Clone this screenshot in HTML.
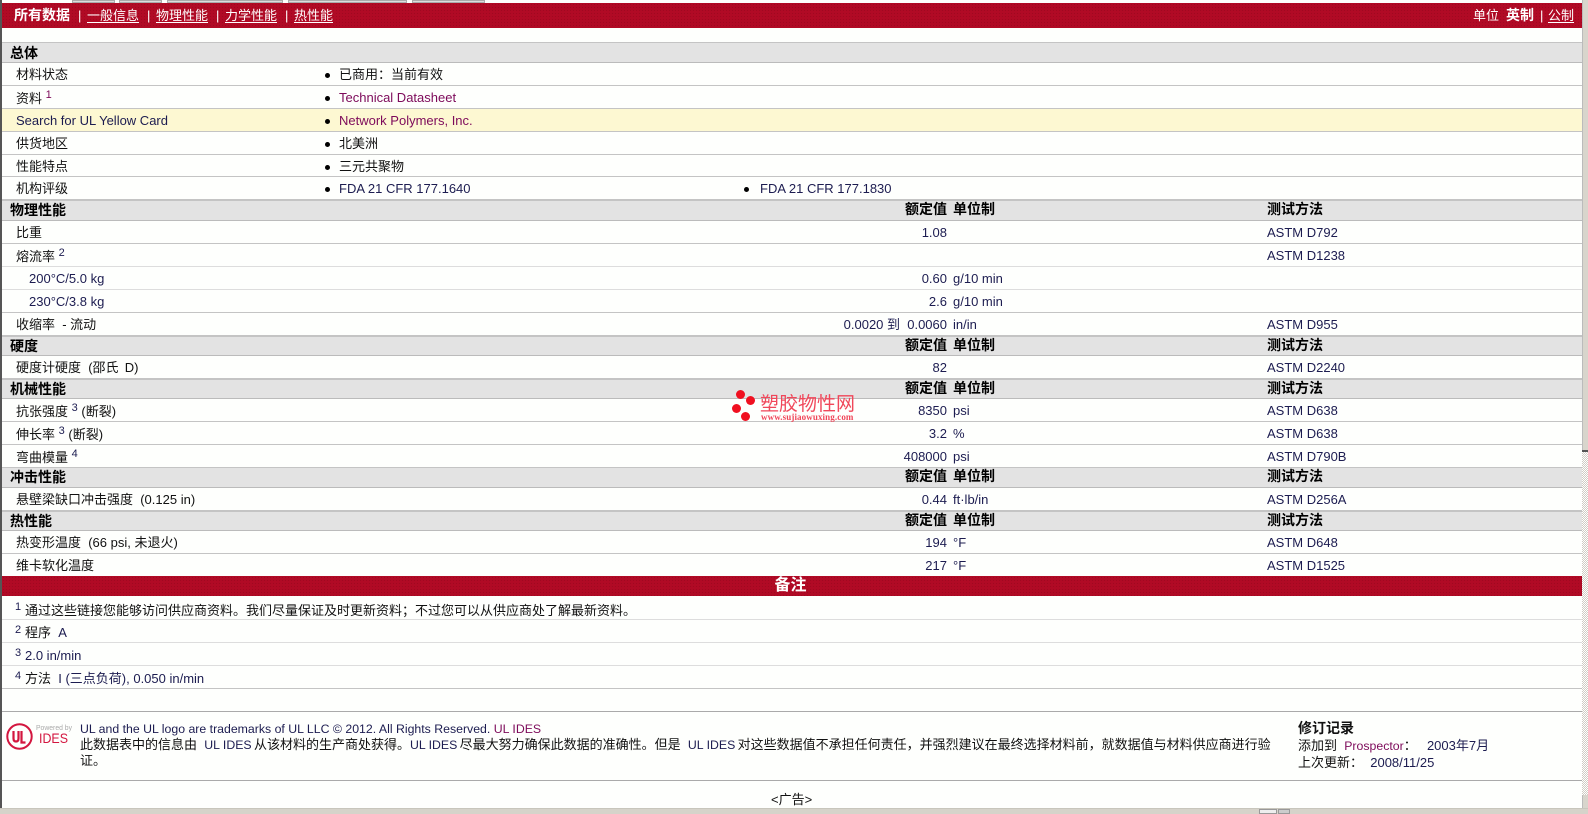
<!DOCTYPE html>
<html lang="zh"><head><meta charset="utf-8"><title>Data</title>
<style>
html,body{margin:0;padding:0;width:1588px;height:814px;overflow:hidden;background:#fefffd}
body{position:relative;font:13px/1 "Liberation Sans","WenQuanYi Zen Hei","Noto Sans CJK SC",sans-serif;color:#111}
.red{position:absolute;left:2px;width:1580px;background-color:#b10a25;background-image:radial-gradient(#a00820 .5px,transparent .8px);background-size:3px 3px;color:#fff}
.red b{font-size:14px}
.r{position:absolute;left:2px;width:1580px;border-bottom:1px solid #c4c4c4;box-sizing:border-box}
.h{background-color:#e3e3e3;border-top:1px solid #c4c4c4;border-bottom:1px solid #bbb;font-weight:bold;color:#000;font-size:14px}
.y{background:#fdf8d2}
.r span,.a{position:absolute;white-space:nowrap}
.r:not(.h)>span:not(.b){margin-top:1px}
.n{left:14px}.s{left:27px}.t{left:8px;margin-top:1px}
.b{left:323px;width:5px;height:5px;border-radius:50%;background:#000;margin-top:10px}
.b2{left:742px}
.c{left:337px}.c2{left:758px}
.l{color:#7d0a5a}
.v{right:635px}.u{left:951px}.m{left:1265px}
.d{color:#1c1c50}
sup{font-size:11px;line-height:0;vertical-align:5px;color:#1c1c50}
.f{font-size:12.3px}
.g{margin-right:-1.3px}
.nt{line-height:28px!important}
.nu{line-height:24px!important}
.r.nu>span.sp{margin-top:2px}
.red u{text-underline-offset:2px}
.dot{position:absolute;border-radius:50%;background:#f01020}
</style></head><body>
<div class="a" style="left:0;top:0;width:2px;height:808px;background:#555"></div>
<div class="a" style="left:72px;top:0;width:43px;height:3px;background:#ddd;border:1px solid #aaa;box-sizing:border-box"></div>
<div class="a" style="left:119px;top:0;width:43px;height:3px;background:#ddd;border:1px solid #aaa;box-sizing:border-box"></div>
<div class="a" style="left:167px;top:0;width:116px;height:3px;background:#ddd;border:1px solid #aaa;box-sizing:border-box"></div>
<div class="a" style="left:288px;top:0;width:119px;height:3px;background:#ddd;border:1px solid #aaa;box-sizing:border-box"></div>
<div class="a" style="left:412px;top:0;width:73px;height:3px;background:#ddd;border:1px solid #aaa;box-sizing:border-box"></div>

<div class="red" style="top:3px;height:25px;line-height:25px">
<span class="a" style="left:12px"><b>所有数据</b></span><span class="a" style="left:76px">|</span>
<span class="a" style="left:85px"><u>一般信息</u></span><span class="a" style="left:145px">|</span>
<span class="a" style="left:154px"><u>物理性能</u></span><span class="a" style="left:214px">|</span>
<span class="a" style="left:223px"><u>力学性能</u></span><span class="a" style="left:283px">|</span>
<span class="a" style="left:292px"><u>热性能</u></span>
<span class="a" style="left:1471px">单位</span><span class="a" style="left:1504px"><b>英制</b></span><span class="a" style="left:1538px">|</span><span class="a" style="left:1546px"><u>公制</u></span>
</div>

<div class="r h" style="top:42px;height:21px;line-height:19px"><span class="t">总体</span></div>
<div class="r" style="top:63px;height:23px;line-height:22px"><span class="n">材料状态</span><span class="b"></span><span class="c">已商用：当前有效</span></div>
<div class="r" style="top:86px;height:23px;line-height:24px"><span class="n">资料 <sup class="l">1</sup></span><span class="b"></span><span class="c l" style="line-height:22px">Technical Datasheet</span></div>
<div class="r y" style="top:109px;height:23px;line-height:22px"><span class="n d">Search for UL Yellow Card</span><span class="b"></span><span class="c l">Network Polymers, Inc.</span></div>
<div class="r" style="top:132px;height:23px;line-height:22px"><span class="n">供货地区</span><span class="b"></span><span class="c">北美洲</span></div>
<div class="r" style="top:155px;height:22px;line-height:22px"><span class="n">性能特点</span><span class="b"></span><span class="c">三元共聚物</span></div>
<div class="r" style="top:177px;height:23px;line-height:22px"><span class="n">机构评级</span><span class="b"></span><span class="c d">FDA 21 CFR 177.1640</span><span class="b b2"></span><span class="c2 d">FDA 21 CFR 177.1830</span></div>

<div class="r h" style="top:200px;height:21px;line-height:17px"><span class="t">物理性能</span><span class="v">额定值</span><span class="u">单位制</span><span class="m">测试方法</span></div>
<div class="r" style="top:221px;height:23px;line-height:22px"><span class="n">比重</span><span class="v d">1.08</span><span class="m d">ASTM D792</span></div>
<div class="r" style="top:244px;height:23px;line-height:24px;border-color:#ddd"><span class="n">熔流率 <sup>2</sup></span><span class="m d" style="line-height:22px">ASTM D1238</span></div>
<div class="r" style="top:267px;height:23px;line-height:22px;border-color:#ddd"><span class="s d">200°C/5.0 kg</span><span class="v d">0.60</span><span class="u d">g/10 min</span></div>
<div class="r" style="top:290px;height:23px;line-height:22px"><span class="s d">230°C/3.8 kg</span><span class="v d">2.6</span><span class="u d">g/10 min</span></div>
<div class="r" style="top:313px;height:23px;line-height:22px"><span class="n">收缩率 &nbsp;- 流动</span><span class="v d">0.0020 到&nbsp;&nbsp;0.0060</span><span class="u d">in/in</span><span class="m d">ASTM D955</span></div>

<div class="r h" style="top:336px;height:20px;line-height:16px"><span class="t">硬度</span><span class="v">额定值</span><span class="u">单位制</span><span class="m">测试方法</span></div>
<div class="r" style="top:356px;height:23px;line-height:22px"><span class="n">硬度计硬度 &nbsp;(邵氏 &thinsp;D)</span><span class="v d">82</span><span class="m d">ASTM D2240</span></div>

<div class="r h" style="top:379px;height:20px;line-height:16px"><span class="t">机械性能</span><span class="v">额定值</span><span class="u">单位制</span><span class="m">测试方法</span></div>
<div class="r" style="top:399px;height:23px;line-height:24px"><span class="n">抗张强度 <sup>3</sup> (断裂)</span><span class="v d" style="line-height:22px">8350</span><span class="u d" style="line-height:22px">psi</span><span class="m d" style="line-height:22px">ASTM D638</span></div>
<div class="r" style="top:422px;height:23px;line-height:24px"><span class="n">伸长率 <sup>3</sup> (断裂)</span><span class="v d" style="line-height:22px">3.2</span><span class="u d" style="line-height:22px">%</span><span class="m d" style="line-height:22px">ASTM D638</span></div>
<div class="r" style="top:445px;height:23px;line-height:24px"><span class="n">弯曲模量 <sup>4</sup></span><span class="v d" style="line-height:22px">408000</span><span class="u d" style="line-height:22px">psi</span><span class="m d" style="line-height:22px">ASTM D790B</span></div>

<div class="r h" style="top:467px;height:21px;line-height:17px"><span class="t">冲击性能</span><span class="v">额定值</span><span class="u">单位制</span><span class="m">测试方法</span></div>
<div class="r" style="top:488px;height:23px;line-height:22px"><span class="n">悬壁梁缺口冲击强度 &nbsp;(0.125 in)</span><span class="v d">0.44</span><span class="u d">ft·lb/in</span><span class="m d">ASTM D256A</span></div>

<div class="r h" style="top:511px;height:20px;line-height:16px"><span class="t">热性能</span><span class="v">额定值</span><span class="u">单位制</span><span class="m">测试方法</span></div>
<div class="r" style="top:531px;height:23px;line-height:22px"><span class="n">热变形温度 &nbsp;(66 psi, 未退火)</span><span class="v d">194</span><span class="u d">°F</span><span class="m d">ASTM D648</span></div>
<div class="r" style="top:554px;height:22px;line-height:22px;border:0"><span class="n">维卡软化温度</span><span class="v d">217</span><span class="u d">°F</span><span class="m d">ASTM D1525</span></div>

<div class="red" style="top:576px;height:20px;line-height:20px;text-align:center;font-size:16px;font-weight:bold;text-indent:-3px">备注</div>

<div class="r nt" style="top:596px;height:24px;border-color:#ddd"><span style="left:13px"><sup>1</sup></span><span style="left:23px">通过这些链接您能够访问供应商资料。我们尽量保证及时更新资料；不过您可以从供应商处了解最新资料。</span></div>
<div class="r nu" style="top:620px;height:23px;border-color:#ddd"><span class="sp" style="left:13px"><sup>2</sup></span><span style="left:23px">程序 &nbsp;<span class="d" style="position:static">A</span></span></div>
<div class="r nu" style="top:643px;height:23px;border-color:#ddd"><span class="sp" style="left:13px"><sup>3</sup></span><span class="d" style="left:23px">2.0 in/min</span></div>
<div class="r nu" style="top:666px;height:23px"><span class="sp" style="left:13px"><sup>4</sup></span><span style="left:23px">方法 &nbsp;<span class="d" style="position:static">I (三点负荷), 0.050 in/min</span></span></div>

<div class="r" style="top:711px;height:1px;background:#aaa;border:0"></div>

<svg class="a" style="left:6px;top:722px" width="70" height="30" viewBox="0 0 70 30">
<circle cx="13.5" cy="14.5" r="12.2" fill="none" stroke="#d3163f" stroke-width="2"/>
<path d="M7.5 9v7.5q0 3 2.5 3t2.5-3V9M15.5 9v11.5h4" fill="none" stroke="#d3163f" stroke-width="2.2"/>
<text x="30" y="8" font-family="Liberation Sans" font-size="7.5" fill="#aaa" textLength="36" lengthAdjust="spacingAndGlyphs">Powered by</text>
<text x="33" y="21" font-family="Liberation Sans" font-size="14" fill="#d3163f" textLength="29" lengthAdjust="spacingAndGlyphs">IDES</text>
</svg>

<div class="a d f" style="left:80px;top:722px;line-height:15px">UL and the UL logo are trademarks of UL LLC © 2012. All Rights Reserved. <span class="l">UL IDES</span></div>
<div class="a" style="left:80px;top:737px;width:1195px;white-space:normal;line-height:16px">此数据表中的信息由 &nbsp;<span class="d f g">UL IDES</span> 从该材料的生产商处获得。<span class="d f g">UL IDES</span> 尽最大努力确保此数据的准确性。但是 &nbsp;<span class="d f g">UL IDES</span> 对这些数据值不承担任何责任，并强烈建议在最终选择材料前，就数据值与材料供应商进行验证。</div>
<div class="a" style="left:1298px;top:721px;line-height:15px;font-size:14px"><b>修订记录</b></div>
<div class="a" style="left:1298px;top:738px;line-height:15px">添加到 &nbsp;<span class="l f">Prospector</span>：&nbsp; <span class="d" style="margin-left:3px">2003年7月</span></div>
<div class="a" style="left:1298px;top:755px;line-height:15px">上次更新：&nbsp; <span class="d">2008/11/25</span></div>

<div class="r" style="top:780px;height:1px;background:#aaa;border:0"></div>
<div class="a" style="left:771px;top:792px;line-height:15px">&lt;广告&gt;</div>

<div class="dot" style="left:736px;top:390px;width:9px;height:9px"></div>
<div class="dot" style="left:746px;top:396px;width:9px;height:9px"></div>
<div class="dot" style="left:732px;top:404px;width:9px;height:9px"></div>
<div class="dot" style="left:741px;top:412px;width:9px;height:9px"></div>
<div class="a" style="left:760px;top:395px;font-size:19px;line-height:20px;color:#f0475a">塑胶物性网</div>
<div class="a" style="left:761px;top:412px;font:bold 9px/10px 'Liberation Serif',serif;color:#f0475a;letter-spacing:.1px">www.sujiaowuxing.com</div>

<div class="a" style="left:1582px;top:0;width:6px;height:450px;background:#d8d5cc;border-left:1px solid #bbb;box-sizing:border-box"></div>
<div class="a" style="left:1582px;top:450px;width:6px;height:345px;background-color:#eee;background-image:repeating-conic-gradient(#d0cdc4 0 25%,#fff 0 50%);background-size:2px 2px;border-top:2px solid #555;box-sizing:border-box"></div>
<div class="a" style="left:1582px;top:795px;width:6px;height:13px;background:#d8d5cc;border-left:1px solid #bbb;box-sizing:border-box"></div>
<div class="a" style="left:0;top:808px;width:1588px;height:1px;background:#c8c6bc"></div>
<div class="a" style="left:0;top:809px;width:1588px;height:5px;background:#d6d3ca"></div>
<div class="a" style="left:1259px;top:809px;width:18px;height:5px;background:#eee;border:1px solid #999;box-sizing:border-box"></div>
<div class="a" style="left:1278px;top:809px;width:12px;height:5px;background:#ccc;border:1px solid #999;box-sizing:border-box"></div>
</body></html>
